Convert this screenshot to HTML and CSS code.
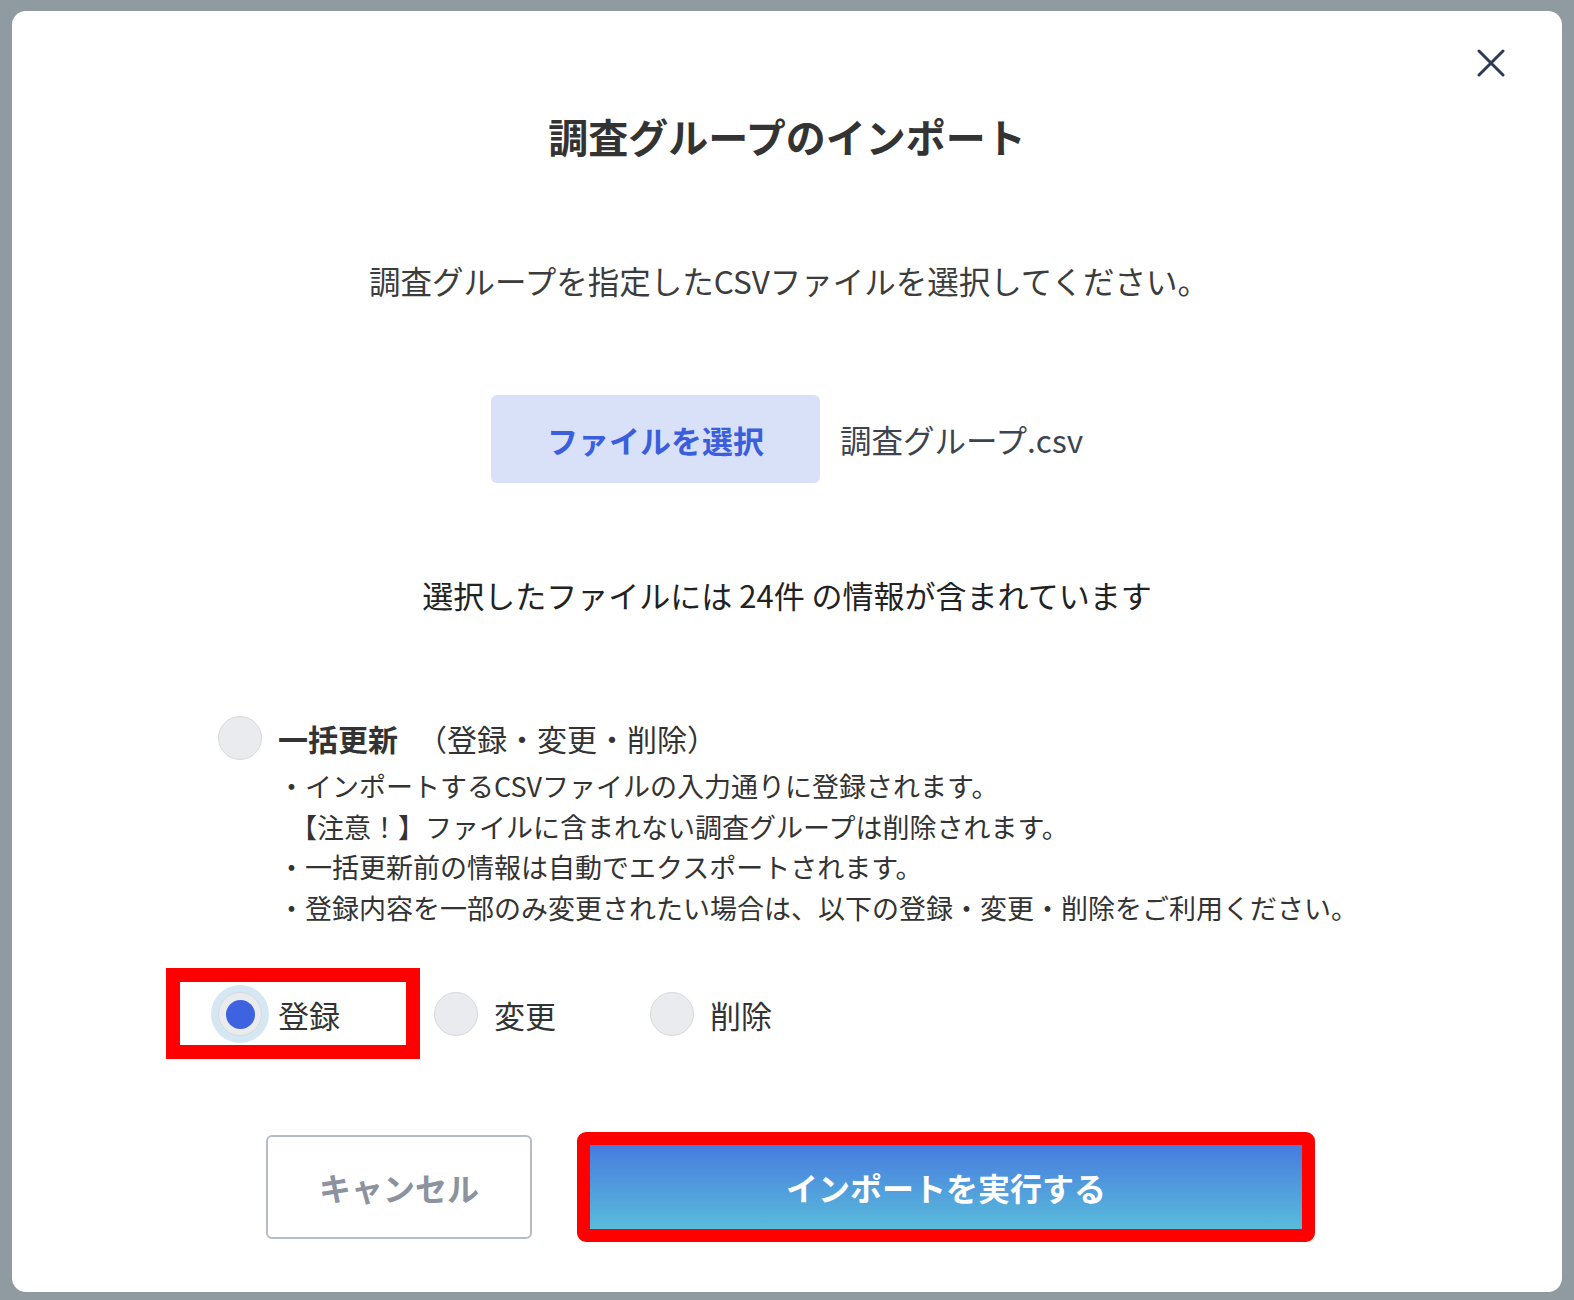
FILE: index.html
```html
<!DOCTYPE html>
<html lang="ja">
<head>
    <meta charset="UTF-8">
    <meta name="viewport" content="width=device-width, initial-scale=1.0">
    <title>調査グループのインポート</title>
    <link rel="stylesheet" href="styles.css">
</head>
<body>
    <div class="modal">
        <button class="close-btn" aria-label="閉じる">
            <svg width="28" height="28" viewBox="0 0 28 28">
                <path d="M2 2 L26 26 M26 2 L2 26" stroke="#2d3a55" stroke-width="3" stroke-linecap="round" fill="none"/>
            </svg>
        </button>

        <h1 class="modal-title">調査グループのインポート</h1>
        <p class="lead">調査グループを指定したCSVファイルを選択してください。</p>

        <div class="file-row">
            <button class="file-btn">ファイルを選択</button>
            <span class="file-name">調査グループ.csv</span>
        </div>

        <p class="count">選択したファイルには 24件 の情報が含まれています</p>

        <div class="mode">
            <label class="mode-label">
                <span class="radio"></span>
                <span><strong>一括更新</strong>（登録・変更・削除）</span>
            </label>
            <ul class="notes">
                <li>・インポートするCSVファイルの入力通りに登録されます。</li>
                <li class="warn">【注意！】ファイルに含まれない調査グループは削除されます。</li>
                <li>・一括更新前の情報は自動でエクスポートされます。</li>
                <li>・登録内容を一部のみ変更されたい場合は、以下の登録・変更・削除をご利用ください。</li>
            </ul>

            <div class="options">
                <span class="mark mark-option"></span>
                <label class="option">
                    <span class="radio checked"></span>
                    <span>登録</span>
                </label>
                <label class="option">
                    <span class="radio"></span>
                    <span>変更</span>
                </label>
                <label class="option">
                    <span class="radio"></span>
                    <span>削除</span>
                </label>
            </div>
        </div>

        <div class="actions">
            <button class="btn-cancel">キャンセル</button>
            <button class="btn-run">インポートを実行する</button>
        </div>
    </div>
</body>
</html>
```

FILE: styles.css
```css
* {
    box-sizing: border-box;
}
body {
    margin: 0;
    padding: 11px 12px 8px;
    background-color: #8f9aa1;
    font-family: "Noto Sans CJK JP", "Noto Sans", sans-serif;
    color: #333;
}
button {
    font-family: inherit;
    cursor: pointer;
}
.modal {
    position: relative;
    width: 1550px;
    background-color: #fff;
    border-radius: 14px;
    padding: 101px 0 53px;
    display: flex;
    flex-direction: column;
    align-items: center;
}
.close-btn {
    position: absolute;
    top: 38px;
    right: 57px;
    width: 28px;
    height: 28px;
    padding: 0;
    border: none;
    background: none;
    display: flex;
}
.modal-title {
    margin: 0;
    font-size: 40px;
    line-height: 48px;
    font-weight: 700;
    color: #333;
}
.lead {
    margin: 100px 0 0;
    font-size: 31.5px;
    line-height: 40px;
    color: #3c3c3c;
    transform: translateX(2px);
}
.file-row {
    margin-top: 95px;
    display: flex;
    align-items: center;
    gap: 20px;
}
.file-btn {
    width: 329px;
    height: 88px;
    border: none;
    border-radius: 6px;
    background-color: #d9e1f8;
    color: #3b5fdc;
    font-size: 31px;
    font-weight: 700;
}
.file-name {
    font-size: 31.5px;
    color: #3d4450;
}
.count {
    margin: 92px 0 0;
    font-size: 31px;
    line-height: 40px;
    color: #222;
}
.mode {
    align-self: stretch;
    margin-top: 101px;
    padding-left: 206px;
}
.mode-label {
    display: flex;
    align-items: center;
    gap: 16px;
    height: 44px;
    font-size: 30px;
    color: #333;
}
.mode-label strong {
    font-weight: 700;
    margin-right: 19px;
}
.radio {
    flex: none;
    width: 44px;
    height: 44px;
    border-radius: 50%;
    background-color: #e9ebef;
    border: 1.5px solid #d6d9de;
    display: flex;
    align-items: center;
    justify-content: center;
}
.radio.checked {
    box-shadow: 0 0 0 7px #d5e7f3;
}
.radio.checked::after {
    content: "";
    width: 29px;
    height: 29px;
    border-radius: 50%;
    background-color: #3d63e0;
}
.notes {
    list-style: none;
    margin: 6px 0 0;
    padding: 0 0 0 60px;
    font-size: 27px;
    line-height: 40.5px;
    color: #333;
}
.notes .warn {
    padding-left: 12px;
}
.options {
    position: relative;
    margin-top: 64px;
    display: flex;
    align-items: center;
    height: 44px;
}
.option {
    width: 216px;
    display: flex;
    align-items: center;
    gap: 16px;
    font-size: 31px;
    color: #333;
}
.mark {
    position: absolute;
    border: 14px solid #ff0000;
}
.mark-option {
    left: -52px;
    top: -24px;
    width: 254px;
    height: 91px;
}
.actions {
    margin-top: 99px;
    display: flex;
    gap: 48px;
    transform: translateX(2px);
}
.btn-cancel {
    width: 266px;
    height: 104px;
    background-color: #fff;
    border: 2px solid #b5bcc7;
    border-radius: 6px;
    color: #8c929e;
    font-size: 32px;
    font-weight: 700;
}
.btn-run {
    width: 732px;
    height: 104px;
    border: none;
    border-radius: 6px;
    background: linear-gradient(to bottom, #4574df, #5bc3da);
    color: #fff;
    font-size: 32px;
    font-weight: 700;
    outline: 13px solid #ff0000;
    outline-offset: -10px;
}
```
